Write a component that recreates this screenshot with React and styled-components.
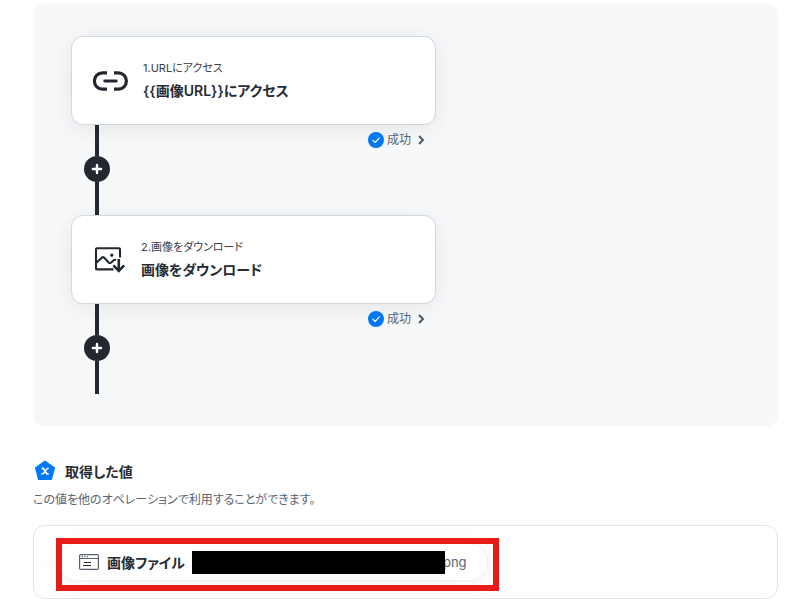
import React from 'react';
import styled, { createGlobalStyle } from 'styled-components';

const GlobalStyle = createGlobalStyle`
    * {
        box-sizing: border-box;
    }

    body {
        margin: 0;
        background: #fff;
        color: #262b33;
        font-family: Inter, "Noto Sans CJK JP", sans-serif;
        font-feature-settings: "palt";
    }

    button {
        font: inherit;
        font-feature-settings: inherit;
        cursor: pointer;
    }
`

const Page = styled.main`
    padding: 3px 18px 16px 33px;
`

const FlowPanel = styled.section`
    padding: 33px 38px;
    border-radius: 12px;
    background: #f6f8fa;
`

const Step = styled.div`
    max-width: 365px;
`

const Card = styled.article`
    display: flex;
    align-items: center;
    gap: 15px;
    height: 89px;
    padding: 0 ${props => props.$inset}px;
    border: 1px solid #cfd7df;
    border-radius: 12px;
    background: #fff;
    box-shadow: 0 4px 24px rgba(0, 0, 0, 0.08);
`

const CardLabel = styled.p`
    margin: 0;
    font-size: 11px;
    line-height: 20px;
    color: #3a4049;
`

const CardTitle = styled.h3`
    margin: 0;
    font-size: 14px;
    font-weight: 600;
    line-height: 25px;
`

const StepFooter = styled.div`
    display: flex;
    align-items: flex-start;
    justify-content: space-between;
    padding: 0 8px 0 12px;
`

const Connector = styled.div`
    display: flex;
    flex-direction: column;
    align-items: center;
    width: 28px;
    height: 90px;
`

const Line = styled.span`
    width: 4px;
    height: ${props => props.$height};
    flex: ${props => (props.$height ? 'none' : 1)};
    background: #23272f;
`

const AddButton = styled.button`
    display: flex;
    align-items: center;
    justify-content: center;
    width: 26px;
    height: 26px;
    padding: 0;
    border: none;
    border-radius: 50%;
    background: #23272f;
`

const StatusButton = styled.button`
    display: flex;
    align-items: center;
    gap: 3px;
    padding: 6px 0 0;
    border: none;
    background: none;
    color: #5a6370;
    font-size: 12px;
    line-height: 18px;
`

const ValueHeader = styled.header`
    display: flex;
    align-items: center;
    gap: 8px;
    margin-top: 33px;
`

const ValueTitle = styled.h2`
    margin: 0;
    font-size: 14px;
    font-weight: 600;
    line-height: 24px;
`

const Description = styled.p`
    margin: 6px 0 15px;
    font-size: 12px;
    line-height: 20px;
    color: #5a6370;
`

const ValueBox = styled.div`
    display: flex;
    padding: 17px 24px;
    border: 1px solid #e3e4e6;
    border-radius: 12px;
`

const Highlight = styled.div`
    position: relative;

    &::after {
        content: "";
        position: absolute;
        inset: -5px -11px -10px -2px;
        border: 6px solid #e81b1b;
        pointer-events: none;
    }
`

const ValueChip = styled.div`
    display: flex;
    align-items: center;
    height: 38px;
    padding: 0 20px;
    border: 1px solid #eff1f5;
    border-radius: 19px;
    background: #fff;
    box-shadow: 0 4px 24px rgba(0, 0, 0, 0.06);
`

const ChipName = styled.span`
    margin: 0 7px 0 8px;
    font-size: 14px;
    font-weight: 600;
`

const Mask = styled.span`
    z-index: 1;
    width: 253px;
    height: 23px;
    background: #000;
`

const Extension = styled.span`
    margin-left: -2px;
    font-size: 13px;
    color: #5a6370;
`

const LinkIcon = () => (
    <svg width="36" height="22" viewBox="-1 0 36 22" fill="none" stroke="#23272f" strokeWidth="3.2" aria-hidden="true">
        <path d="M14 2.8H9.6a8 8 0 0 0 0 16.4H14M21 2.8h4.2a8 8 0 0 1 0 16.4H21" />
        <path d="M11.7 11h11.6" strokeWidth="2.8" strokeLinecap="round" />
    </svg>
)

const ImageDownIcon = () => (
    <svg width="32" height="28" viewBox="0 0 32 28" fill="none" stroke="#23272f" strokeWidth="2.1" aria-hidden="true">
        <path d="M26 11.5V3.2a1 1 0 0 0-1-1H3a1 1 0 0 0-1 1v19.2a1 1 0 0 0 1 1h16.5" />
        <path d="M2.3 16.8 8 11.6q1-.9 2 0l4.9 5.2q.9.9 2 0l2.8-2.5q.8-.8 2.3-.2" />
        <circle cx="17.8" cy="9.2" r="1.6" fill="#23272f" stroke="none" />
        <path d="M24.8 13v11.5M19.4 19.4l5.4 5.4 5.4-5.4" strokeWidth="2.6" />
    </svg>
)

const PlusIcon = () => (
    <svg width="12" height="12" viewBox="0 0 12 12" stroke="#fff" strokeWidth="2.4" strokeLinecap="round" aria-hidden="true">
        <path d="M6 1.9v8.2M1.9 6h8.2" />
    </svg>
)

const CheckIcon = () => (
    <svg width="16" height="16" viewBox="0 0 16 16" fill="none" aria-hidden="true">
        <circle cx="8" cy="8" r="8" fill="#0078f5" />
        <path d="M4.8 8.2l2.3 2.3 4.3-4.6" stroke="#fff" strokeWidth="1.1" strokeLinecap="round" strokeLinejoin="round" />
    </svg>
)

const ChevronIcon = () => (
    <svg width="14" height="14" viewBox="0 0 14 14" fill="none" stroke="#4b525c" strokeWidth="1.8" aria-hidden="true">
        <path d="M5 3l4 4-4 4" />
    </svg>
)

const VariableIcon = () => (
    <svg width="24" height="24" viewBox="0 0 24 24" aria-hidden="true">
        <path d="M12 1.4 21.2 8 18.2 19.2H5.8L2.8 8Z" fill="#0078f5" stroke="#0078f5" strokeWidth="1.6" strokeLinejoin="round" />
        <g stroke="#fff" fill="none">
            <path d="M8.6 8.4h1.8l3.3 5.4h2" strokeWidth="1.8" />
            <path d="M15.8 8.4h-1.4l-4.2 5.4H8.2" strokeWidth="1.4" />
        </g>
    </svg>
)

const WindowIcon = () => (
    <svg width="20" height="16" viewBox="0 0 20 16" fill="none" stroke="#59606b" aria-hidden="true">
        <rect x=".6" y=".6" width="18.8" height="14.8" rx="1.2" strokeWidth="1.2" />
        <path d="M1 4.5h18" />
        <path d="M2.6 2.6h1.3M5.2 2.6h1.3M7.8 2.6h1.3" strokeWidth="1.2" />
        <path d="M5 8.5h7M4 11.5h8" stroke="#23272f" strokeWidth="1.2" />
    </svg>
)

const steps = [
    { label: '1.URLにアクセス', title: '{{画像URL}}にアクセス', icon: <LinkIcon />, inset: 20 },
    { label: '2.画像をダウンロード', title: '画像をダウンロード', icon: <ImageDownIcon />, inset: 22 },
]

const FlowStep = ({ label, title, icon, inset }) => (
    <Step>
        <Card $inset={inset}>
            {icon}
            <div>
                <CardLabel>{label}</CardLabel>
                <CardTitle>{title}</CardTitle>
            </div>
        </Card>
        <StepFooter>
            <Connector>
                <Line $height="31px" />
                <AddButton type="button" aria-label="追加">
                    <PlusIcon />
                </AddButton>
                <Line />
            </Connector>
            <StatusButton type="button">
                <CheckIcon />
                成功
                <ChevronIcon />
            </StatusButton>
        </StepFooter>
    </Step>
)

const App = () => (
    <>
        <GlobalStyle />
        <Page>
            <FlowPanel>
                {steps.map(step => (
                    <FlowStep key={step.label} {...step} />
                ))}
            </FlowPanel>
            <section>
                <ValueHeader>
                    <VariableIcon />
                    <ValueTitle>取得した値</ValueTitle>
                </ValueHeader>
                <Description>この値を他のオペレーションで利用することができます。</Description>
                <ValueBox>
                    <Highlight>
                        <ValueChip>
                            <WindowIcon />
                            <ChipName>画像ファイル</ChipName>
                            <Mask />
                            <Extension>png</Extension>
                        </ValueChip>
                    </Highlight>
                </ValueBox>
            </section>
        </Page>
    </>
)

export default App;
